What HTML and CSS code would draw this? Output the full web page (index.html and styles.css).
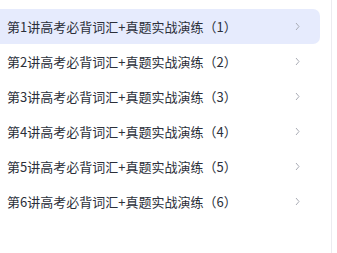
FILE: index.html
```html
<!DOCTYPE html>
<html lang="zh">
<head>
<meta charset="utf-8">
<link rel="stylesheet" href="styles.css">
</head>
<body>
<div class="page">
  <ul class="list">
    <li class="item active"><span class="title">第1讲高考必背词汇+真题实战演练（1）</span><svg class="chev" viewBox="0 0 5 9" width="5" height="9"><path d="M1 1l3 3.5L1 8" fill="none" stroke="#a9acb5" stroke-width="1"/></svg></li>
    <li class="item"><span class="title">第2讲高考必背词汇+真题实战演练（2）</span><svg class="chev" viewBox="0 0 5 9" width="5" height="9"><path d="M1 1l3 3.5L1 8" fill="none" stroke="#a9acb5" stroke-width="1"/></svg></li>
    <li class="item"><span class="title">第3讲高考必背词汇+真题实战演练（3）</span><svg class="chev" viewBox="0 0 5 9" width="5" height="9"><path d="M1 1l3 3.5L1 8" fill="none" stroke="#a9acb5" stroke-width="1"/></svg></li>
    <li class="item"><span class="title">第4讲高考必背词汇+真题实战演练（4）</span><svg class="chev" viewBox="0 0 5 9" width="5" height="9"><path d="M1 1l3 3.5L1 8" fill="none" stroke="#a9acb5" stroke-width="1"/></svg></li>
    <li class="item"><span class="title">第5讲高考必背词汇+真题实战演练（5）</span><svg class="chev" viewBox="0 0 5 9" width="5" height="9"><path d="M1 1l3 3.5L1 8" fill="none" stroke="#a9acb5" stroke-width="1"/></svg></li>
    <li class="item"><span class="title">第6讲高考必背词汇+真题实战演练（6）</span><svg class="chev" viewBox="0 0 5 9" width="5" height="9"><path d="M1 1l3 3.5L1 8" fill="none" stroke="#a9acb5" stroke-width="1"/></svg></li>
  </ul>
</div>
</body>
</html>
```

FILE: styles.css
```css
html, body {
  margin: 0;
  padding: 0;
  background: #fff;
}
body {
  font-family: "Noto Sans CJK SC", "Noto Sans", sans-serif;
  width: 337px;
  height: 253px;
  overflow: hidden;
}
.page {
  width: 331px;
  height: 253px;
  border-right: 1px solid #ececf0;
  box-sizing: content-box;
}
.list {
  list-style: none;
  margin: 0;
  padding: 9px 0 0 0;
  width: 320px;
}
.item {
  height: 35px;
  display: flex;
  align-items: center;
  justify-content: space-between;
  padding: 0 20px 0 7px;
  box-sizing: border-box;
  border-radius: 0 7px 7px 0;
}
.item.active {
  background: #e6ebfd;
}
.title {
  font-size: 13px;
  color: #2b2f3a;
  white-space: nowrap;
  letter-spacing: 0;
}
.chev {
  display: block;
}
```
